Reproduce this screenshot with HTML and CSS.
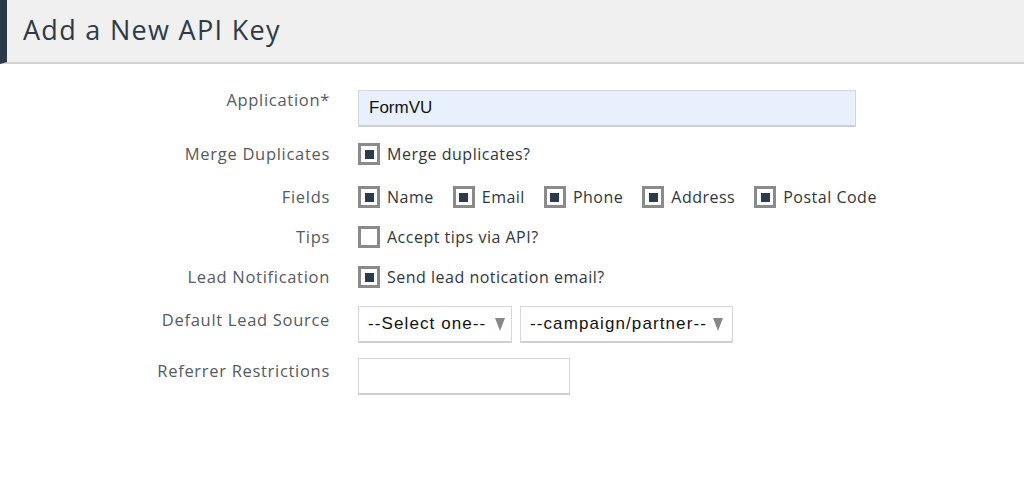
FILE: index.html
```html
<!DOCTYPE html>
<html>
<head>
<meta charset="utf-8">
<link rel="stylesheet" href="styles.css">
</head>
<body>
<div class="header"><h1 class="title">Add a New API Key</h1></div>
<form class="form">
  <div class="row row-app">
    <label class="label">Application*</label>
    <div class="field"><div class="text-input filled">FormVU</div></div>
  </div>
  <div class="row row-merge">
    <label class="label">Merge Duplicates</label>
    <div class="field">
      <span class="check"><span class="box checked"></span><span class="check-text">Merge duplicates?</span></span>
    </div>
  </div>
  <div class="row row-fields">
    <label class="label">Fields</label>
    <div class="field fields-list">
      <span class="check"><span class="box checked"></span><span class="check-text">Name</span></span>
      <span class="check"><span class="box checked"></span><span class="check-text">Email</span></span>
      <span class="check"><span class="box checked"></span><span class="check-text">Phone</span></span>
      <span class="check"><span class="box checked"></span><span class="check-text">Address</span></span>
      <span class="check"><span class="box checked"></span><span class="check-text">Postal Code</span></span>
    </div>
  </div>
  <div class="row row-tips">
    <label class="label">Tips</label>
    <div class="field">
      <span class="check"><span class="box"></span><span class="check-text">Accept tips via API?</span></span>
    </div>
  </div>
  <div class="row row-lead">
    <label class="label">Lead Notification</label>
    <div class="field">
      <span class="check"><span class="box checked"></span><span class="check-text">Send lead notication email?</span></span>
    </div>
  </div>
  <div class="row row-source">
    <label class="label label-select">Default Lead Source</label>
    <div class="field selects">
      <div class="select select-one"><span>--Select one--</span><span class="arrow"></span></div>
      <div class="select select-campaign"><span>--campaign/partner--</span><span class="arrow"></span></div>
    </div>
  </div>
  <div class="row row-ref">
    <label class="label label-ref">Referrer Restrictions</label>
    <div class="field"><div class="text-input empty"></div></div>
  </div>
</form>
</body>
</html>
```

FILE: styles.css
```css
* { box-sizing: border-box; }
html, body { margin: 0; padding: 0; background: #ffffff; }
body {
  font-family: "Open Sans", Lato, "Liberation Sans", sans-serif;
  color: #333c48;
}
.header {
  height: 64px;
  background: #f0f0f0;
  border-left: 7px solid #2b3a4b;
  border-bottom: 2px solid #d3d3d3;
  padding-left: 16px;
  display: flex;
  align-items: center;
}
.title {
  margin: 0;
  font-weight: 400;
  font-size: 27px;
  color: #2f3a47;
  letter-spacing: 1.3px;
  padding-bottom: 3px;
}
.form {
  display: flex;
  flex-direction: column;
  padding-top: 26px;
}
.row {
  display: flex;
  align-items: flex-start;
}
.label {
  width: 330px;
  text-align: right;
  font-size: 16.5px;
  line-height: 20px;
  letter-spacing: 0.7px;
  color: #555a60;
  flex: none;
}
.field {
  margin-left: 28px;
  display: flex;
  align-items: center;
}
.row-merge { margin-top: 16px; }
.row-fields { margin-top: 21px; }
.row-tips { margin-top: 18px; }
.row-lead { margin-top: 18px; }
.row-source { margin-top: 18px; }
.row-ref { margin-top: 15px; }
.row-merge .label, .row-fields .label, .row-tips .label, .row-lead .label { padding-top: 1px; }
.label-select { padding-top: 4px; }
.label-ref { padding-top: 3px; }

.text-input {
  height: 37px;
  border: 1px solid #d6d6d6;
  border-bottom: 2px solid #cfcfcf;
  font-family: "Liberation Sans", Arial, sans-serif;
  font-size: 17px;
  color: #111;
  padding-left: 10px;
  display: flex;
  align-items: center;
}
.filled { width: 498px; background: #e8f0fe; }
.empty { width: 212px; height: 37px; background: #fff; }

.check {
  display: flex;
  align-items: center;
  height: 22px;
}
.box {
  width: 22px;
  height: 22px;
  border: 3px solid #8a8a8a;
  background: #fff;
  display: flex;
  align-items: center;
  justify-content: center;
  flex: none;
}
.box.checked::after {
  content: "";
  width: 9px;
  height: 9px;
  background: #2d3a4b;
}
.check-text {
  margin-left: 7px;
  font-size: 16px;
  letter-spacing: 0.5px;
  color: #2f3640;
}
.fields-list .check { margin-right: 19px; }

.selects { gap: 8px; }
.select {
  height: 37px;
  border: 1px solid #d6d6d6;
  border-bottom: 2px solid #cfcfcf;
  background: #fff;
  font-family: "Liberation Sans", Arial, sans-serif;
  font-size: 17px;
  letter-spacing: 1.1px;
  color: #111;
  display: flex;
  align-items: center;
  gap: 9px;
  padding: 0 0 0 9px;
}
.select-campaign { gap: 6px; }
.select-one { width: 154px; }
.select-campaign { width: 213px; }
.arrow {
  width: 0;
  height: 0;
  border-left: 5px solid transparent;
  border-right: 5px solid transparent;
  border-top: 13px solid #888;
}
```
